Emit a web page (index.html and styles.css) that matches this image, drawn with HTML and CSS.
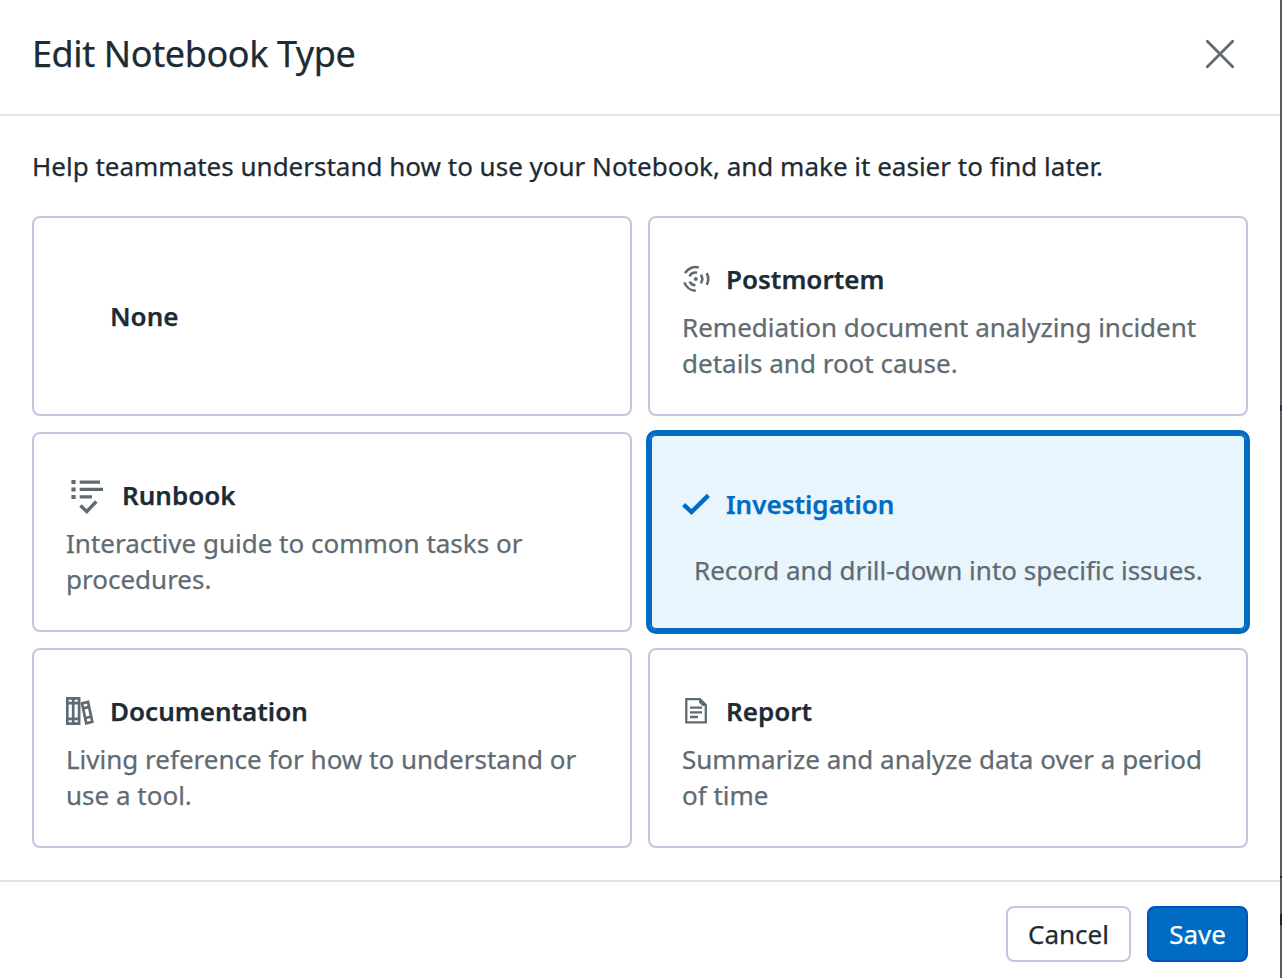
FILE: index.html
```
<!DOCTYPE html>
<html lang="en">
<head>
<meta charset="utf-8">
<title>Edit Notebook Type</title>
<link rel="stylesheet" href="styles.css">
</head>
<body>
<div class="page">
<main class="dialog">
  <header class="head">
    <h1 class="title">Edit Notebook Type</h1>
    <button class="close" aria-label="Close"><svg width="30" height="30" viewBox="0 0 30 30" fill="none" stroke="#5f6b73" stroke-width="2.8" stroke-linecap="round"><path d="M2.3 2.3 27.7 27.7M27.7 2.3 2.3 27.7"/></svg></button>
  </header>
  <section class="body">
    <p class="intro">Help teammates understand how to use your Notebook, and make it easier to find later.</p>
    <div class="grid">
      <div class="card none"><h2 class="name">None</h2></div>
      <div class="card">
        <div class="row"><svg class="icon" viewBox="0 0 28 28" fill="none" stroke="#5f6b73" stroke-width="2.6"><circle cx="13.8" cy="14" r="2" fill="#5f6b73" stroke="none"/><path d="M3 8.2A12.2 12.2 0 0 1 16.8 2.4M2.4 17.3A12.2 12.2 0 0 0 13.8 25.7M24.7 8.2A12.2 12.2 0 0 1 24.7 19.8M7.5 11.3A7 7 0 0 1 15 7.7M7.6 16.6A7 7 0 0 0 13.4 20.3M18.8 9.8A7 7 0 0 1 18.8 18.2"/></svg><h2 class="name">Postmortem</h2></div>
        <p class="desc">Remediation document analyzing incident details and root cause.</p>
      </div>
      <div class="card">
        <div class="row"><svg class="icon wide" viewBox="0 0 40 40" fill="#5f6b73"><path d="M5.4 4h4.2v4H5.4zM5.4 11.4h4.2v4H5.4zM5.4 18.9h4.2v4H5.4zM13.7 4.5H34v3.2H13.7zM13.7 11.8H37v3.2H13.7zM13.7 19.3H26v3.2H13.7z"/><path d="M14.4 29.5l6.4 6 9.5-10" fill="none" stroke="#5f6b73" stroke-width="3.4"/></svg><h2 class="name">Runbook</h2></div>
        <p class="desc">Interactive guide to common tasks or procedures.</p>
      </div>
      <div class="card selected">
        <div class="row"><svg class="icon" viewBox="0 0 28 28" fill="none" stroke="#006bc2" stroke-width="4.4"><path d="M1.6 14.6l7.9 7.4L26.4 5.4"/></svg><h2 class="name">Investigation</h2></div>
        <p class="desc">Record and drill-down into specific issues.</p>
      </div>
      <div class="card">
        <div class="row"><svg class="icon" viewBox="0 0 28 28" fill="none" stroke="#5f6b73" stroke-width="2.7"><path d="M1.3 1.3h11.8v25.4H1.3zM7.2 1v26M1 6.2h12M1 21.8h12"/><path d="M16 6.4l6-1.4 4.3 19.8-6 1.5zM17.2 11.4l6.2-1.5M19.4 21l6.2-1.5"/></svg><h2 class="name">Documentation</h2></div>
        <p class="desc">Living reference for how to understand or use a tool.</p>
      </div>
      <div class="card">
        <div class="row"><svg class="icon" viewBox="0 0 28 28" fill="none" stroke="#5f6b73" stroke-width="2.3"><path d="M4.3 2.2H18L23.8 8v17.4H4.3z"/><path d="M8 10.7h12M8 15.3h12M8 20h8"/><path d="M17 2l7 7h-3.5L17 5.5z" fill="#5f6b73" stroke="none"/></svg><h2 class="name">Report</h2></div>
        <p class="desc">Summarize and analyze data over a period of time</p>
      </div>
    </div>
  </section>
  <footer class="foot">
    <button class="btn">Cancel</button>
    <button class="btn primary">Save</button>
  </footer>
</main>
<div class="backdrop"></div>
</div>
</body>
</html>
```
FILE: styles.css
```
* { box-sizing: border-box; margin: 0; }
body { font: 26px/36px "Noto Sans", sans-serif; color: #1c2b34; background: #fff; -webkit-text-stroke: 0.25px; }
.page { display: flex; width: 1282px; height: 978px; overflow: hidden; }
.dialog { width: 1280px; display: flex; flex-direction: column; background: #fff; }
.backdrop { width: 2px; background: linear-gradient(#5c5c5c 405px, #1c3358 405px, #1c3358 411px, #5c5c5c 411px, #5c5c5c 876px, #222 876px, #222 878px, #5c5c5c 878px, #5c5c5c 914px, #222 914px, #222 925px, #5c5c5c 925px); }
.head { height: 116px; padding: 0 45px 6px 32px; display: flex; align-items: center; justify-content: space-between; border-bottom: 2px solid #e0e5ec; }
.title { font-size: 36px; line-height: 48px; font-weight: 400; letter-spacing: -0.4px; }
.close { border: 0; padding: 0; background: none; width: 30px; height: 30px; }
.close svg { display: block; }
.body { height: 764px; padding: 32px 32px 0; }
.intro { margin-bottom: 32px; white-space: nowrap; }
.grid { display: grid; grid-template-columns: 600px 600px; grid-auto-rows: 200px; gap: 16px; }
.card { border: 2px solid #c0c7de; border-radius: 8px; padding: 10px 32px 0; display: flex; flex-direction: column; justify-content: center; gap: 12px; }
.none { padding: 0 32px 0 76px; }
.row { display: flex; align-items: center; gap: 16px; height: 36px; }
.name { font-size: 26px; line-height: 36px; font-weight: 600; }
.icon { width: 28px; height: 28px; flex: none; }
.wide { width: 40px; height: 40px; margin-top: 2px; }
.desc { color: #5f6b73; }
.selected { border-color: #006bc2; background: #e8f5fc; box-shadow: 0 0 0 2px #006bc2, inset 0 0 0 2px #006bc2; gap: 30px; }
.selected .name { color: #006bc2; }
.selected .desc { padding-left: 12px; white-space: nowrap; }
.foot { height: 98px; border-top: 2px solid #dfe3ee; padding: 24px 32px 0; display: flex; justify-content: flex-end; gap: 16px; }
.btn { width: 125px; height: 56px; padding: 0; border: 2px solid #c0c7de; border-radius: 8px; background: #fff; color: #1c2b34; font: inherit; }
.primary { width: 101px; border-color: #0052bd; background: #006bc2; color: #fff; }
```
